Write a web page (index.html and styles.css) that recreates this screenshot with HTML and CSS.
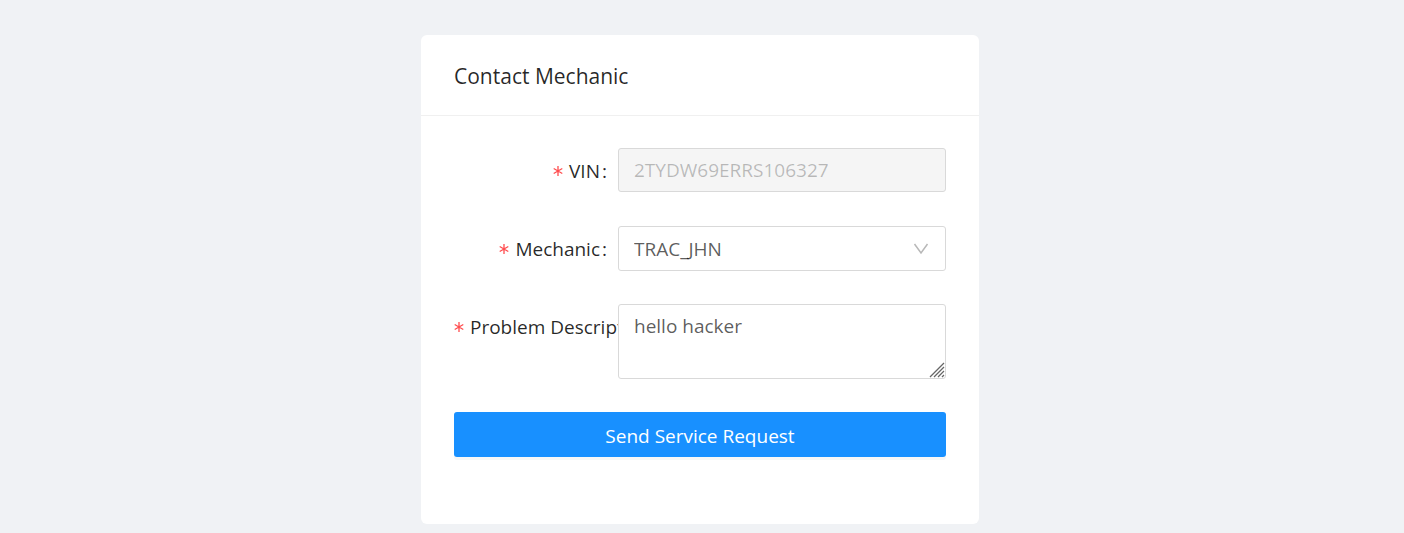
FILE: index.html
```html
<!DOCTYPE html>
<html lang="en">
<head>
<meta charset="utf-8">
<meta name="viewport" content="width=device-width, initial-scale=1">
<title>Contact Mechanic</title>
<link rel="stylesheet" href="styles.css">
</head>
<body>
<main class="page">
  <section class="card">
    <header class="card-head"><h1 class="card-title">Contact Mechanic</h1></header>
    <form class="form">
      <div class="row">
        <label class="label" for="vin"><svg class="star" viewBox="0 0 10 10" aria-hidden="true"><path d="M5 0v10M.7 2.500l8.600 5M9.300 2.500l-8.600 5"/></svg>VIN<span class="colon">:</span></label>
        <input class="control" id="vin" type="text" value="2TYDW69ERRS106327" disabled>
      </div>
      <div class="row">
        <label class="label" for="mechanic"><svg class="star" viewBox="0 0 10 10" aria-hidden="true"><path d="M5 0v10M.7 2.500l8.600 5M9.300 2.500l-8.600 5"/></svg>Mechanic<span class="colon">:</span></label>
        <div class="select-wrap">
          <select class="control select" id="mechanic"><option>TRAC_JHN</option></select>
          <svg class="chevron" viewBox="0 0 16 12" aria-hidden="true"><path d="M1.500 1L8 10l6.500-9"/></svg>
        </div>
      </div>
      <div class="row">
        <label class="label label-long" for="problem"><svg class="star" viewBox="0 0 10 10" aria-hidden="true"><path d="M5 0v10M.7 2.500l8.600 5M9.300 2.500l-8.600 5"/></svg>Problem Description<span class="colon">:</span></label>
        <div class="area-wrap">
          <textarea class="control area" id="problem">hello hacker</textarea>
          <svg class="grip" viewBox="0 0 16 16" aria-hidden="true"><path d="M1 15L15 1M5 15L15 5M9 15l6-6M13 15l2-2"/></svg>
        </div>
      </div>
      <button class="submit" type="submit">Send Service Request</button>
    </form>
  </section>
</main>
</body>
</html>
```
FILE: styles.css
```css
* { box-sizing: border-box; }
body {
  margin: 0;
  min-height: 100vh;
  background: #f0f2f5;
  color: rgba(0, 0, 0, 0.85);
  font-family: "Segoe UI", "Open Sans", "Noto Sans", sans-serif;
  font-size: 19px;
  line-height: 30px;
}
.page {
  display: flex;
  justify-content: center;
  padding: 35px 20px 9px 16px;
}
.card {
  width: 100%;
  max-width: 558px;
  background: #fff;
  border-radius: 6px;
}
.card-head {
  padding: 25px 33px 23px;
  border-bottom: 1px solid #f0f0f0;
}
.card-title {
  margin: 0;
  font-size: 21px;
  font-weight: 400;
  line-height: 32px;
}
.form { padding: 32px 33px 67px; }
.row {
  display: grid;
  grid-template-columns: 1fr 2fr;
  margin-bottom: 33px;
}
.label {
  display: flex;
  align-items: center;
  justify-content: flex-end;
  height: 45px;
  overflow: hidden;
  white-space: nowrap;
}
.label-long { justify-content: flex-start; }
.star {
  flex: none;
  width: 10px;
  height: 10px;
  margin-right: 6px;
  fill: none;
  stroke: #ff4d4f;
  stroke-width: 1.3;
}
.colon { margin: 0 11px 0 2px; }
.control {
  display: block;
  width: 100%;
  height: 44px;
  margin: 0;
  padding: 6px 15px;
  appearance: none;
  background: #fff;
  border: 1px solid #d9d9d9;
  border-radius: 3px;
  color: rgba(0, 0, 0, 0.65);
  font: inherit;
}
.control:disabled {
  background: #f5f5f5;
  color: rgba(0, 0, 0, 0.25);
}
.select { height: 45px; }
.select-wrap, .area-wrap { position: relative; }
.chevron {
  position: absolute;
  top: 17px;
  right: 17px;
  width: 16px;
  height: 12px;
  fill: none;
  stroke: #b8b8b8;
  stroke-width: 1.5;
  pointer-events: none;
}
.area {
  height: 75px;
  resize: none;
}
.grip {
  position: absolute;
  right: 1px;
  bottom: 1px;
  width: 16px;
  height: 16px;
  fill: none;
  stroke: #666;
  stroke-width: 1.3;
  pointer-events: none;
}
.submit {
  display: block;
  width: 100%;
  height: 45px;
  padding: 2px 0 0;
  border: 0;
  border-radius: 3px;
  background: #1890ff;
  box-shadow: 0 3px 0 rgba(0, 0, 0, 0.03);
  color: #fff;
  font: inherit;
}
```
